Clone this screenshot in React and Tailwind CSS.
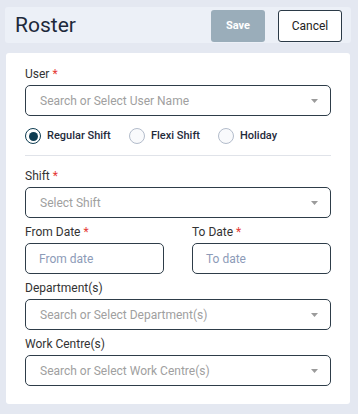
import React, { useState } from 'react';

const Caret = () => (
    <svg width="7" height="4" viewBox="0 0 7 4" className="shrink-0">
        <polygon points="0,0 7,0 3.5,4" fill="#9b9b9b" />
    </svg>
);

const Label = ({ text, required }) => (
    <div className="h-[16px] leading-[16px] text-[12px] text-[#333333] mb-[3px]">
        {text}
        {required && <span className="text-[#e53935] ml-[3px]">*</span>}
    </div>
);

const SelectBox = ({ placeholder }) => (
    <div className="h-[31px] border border-[#2e3d49] rounded-[5px] flex items-center justify-between pl-[14px] pr-[12px]">
        <span className="text-[12px] text-[#a0a0a0]">{placeholder}</span>
        <Caret />
    </div>
);

const DateBox = ({ placeholder }) => (
    <div className="h-[31px] border border-[#2e3d49] rounded-[5px] flex items-center pl-[13px]">
        <span className="text-[12px] text-[#8d9bb8]">{placeholder}</span>
    </div>
);

const Radio = ({ label, checked, onClick, width }) => (
    <button type="button" onClick={onClick} className={`flex items-center gap-[6px] ${width}`}>
        <span
            className={`w-[16px] h-[16px] rounded-full border-[1.5px] flex items-center justify-center shrink-0 ${checked ? 'border-[#0f3d52]' : 'border-[#b3bccb] bg-[#f9fafc]'}`}
        >
            {checked && <span className="w-[9px] h-[9px] rounded-full bg-[#0f3d52]" />}
        </span>
        <span className="text-[11px] font-medium text-[#1f2b3c]">{label}</span>
    </button>
);

const App = () => {
    const [shiftType, setShiftType] = useState('regular');

    return (
        <div className="min-h-screen bg-[#e4e8f1] pt-[7px] pl-[5px] pr-[7px] pb-[8px]" style={{ fontFamily: 'Roboto, "Liberation Sans", sans-serif' }}>
            {/* Header */}
            <div className="h-[36px] bg-[#ecf0f7] rounded-[3px] flex items-center justify-between pl-[10px] pr-[9px]">
                <h1 className="text-[21px] text-[#1d293b] leading-none">Roster</h1>
                <div className="flex items-center gap-[13px] pt-[2px]">
                    <button className="w-[54px] h-[32px] rounded-[3px] bg-[#9aadba] text-white text-[11px] font-bold">Save</button>
                    <button className="w-[64px] h-[32px] rounded-[3px] bg-white border border-[#2b3a47] text-[#222] text-[12px]">Cancel</button>
                </div>
            </div>

            {/* Form card */}
            <div className="bg-white rounded-[3px] mt-[10px] ml-[1px] mr-[1px] pt-[13px] pb-[18px] px-[19px]">
                <Label text="User" required />
                <SelectBox placeholder="Search or Select User Name" />

                <div className="flex items-center mt-[12px] h-[16px]">
                    <Radio label="Regular Shift" width="w-[104px]" checked={shiftType === 'regular'} onClick={() => setShiftType('regular')} />
                    <Radio label="Flexi Shift" width="w-[89px]" checked={shiftType === 'flexi'} onClick={() => setShiftType('flexi')} />
                    <Radio label="Holiday" checked={shiftType === 'holiday'} onClick={() => setShiftType('holiday')} />
                </div>

                <div className="h-px bg-[#e0e3e9] mt-[11px] mb-[12px]" />

                <Label text="Shift" required />
                <SelectBox placeholder="Select Shift" />

                <div className="grid grid-cols-2 gap-[28px] mt-[6px]">
                    <div>
                        <Label text="From Date" required />
                        <DateBox placeholder="From date" />
                    </div>
                    <div>
                        <Label text="To Date" required />
                        <DateBox placeholder="To date" />
                    </div>
                </div>

                <div className="mt-[6px]">
                    <Label text="Department(s)" />
                    <SelectBox placeholder="Search or Select Department(s)" />
                </div>

                <div className="mt-[6px]">
                    <Label text="Work Centre(s)" />
                    <SelectBox placeholder="Search or Select Work Centre(s)" />
                </div>
            </div>
        </div>
    );
};

export default App;
